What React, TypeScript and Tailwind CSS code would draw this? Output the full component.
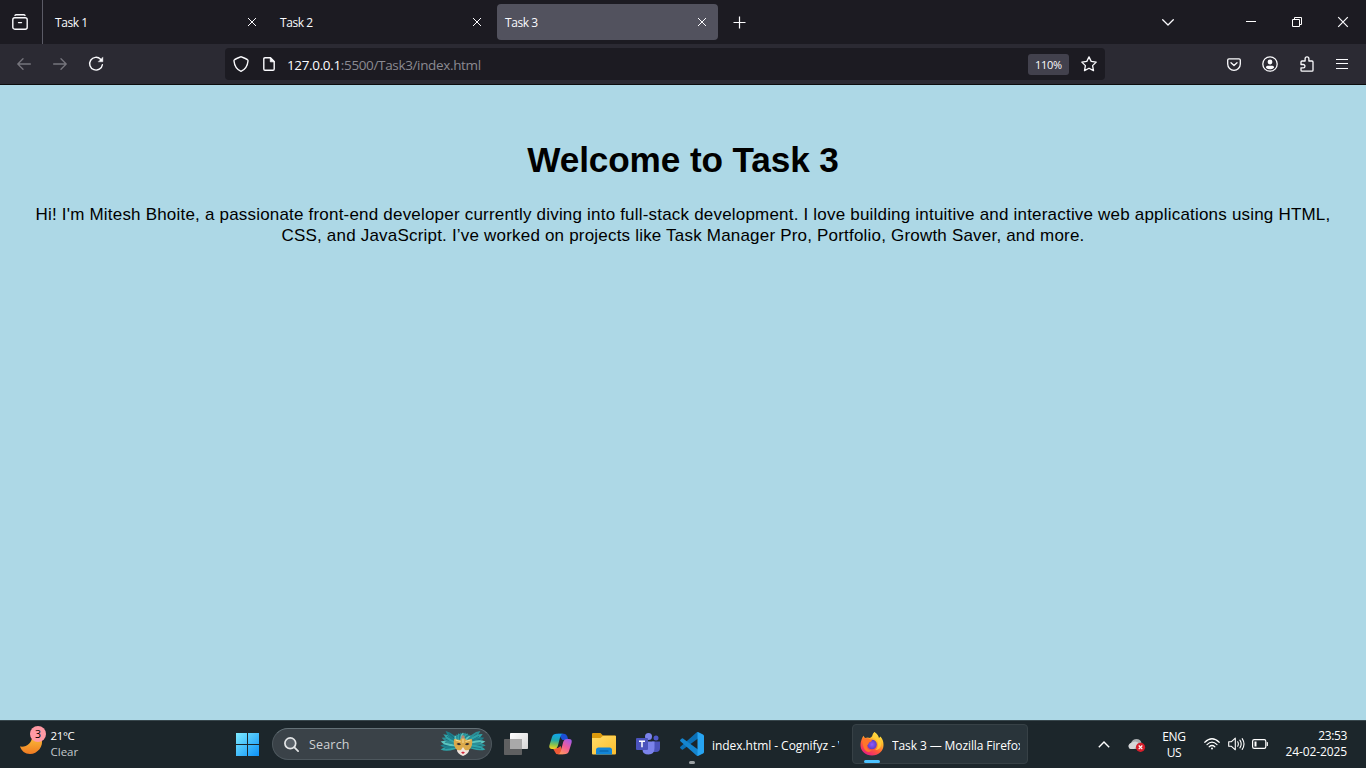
import type { ReactNode } from "react";

const FEATHERS = [-100, -90, -80, -70, -60, -50, -40, -30, -20, -10, 0, 10, 20, 30, 40, 50, 60, 70, 80, 90, 100];
const FEATHER_COLORS = ["#2fa3a8", "#1d7f8c", "#5cc6c0", "#2b8f97"];

function CloseGlyph({ className }: { className: string }) {
  return (
    <svg className={className} viewBox="0 0 10 10" fill="none" stroke="#fbfbfe" strokeWidth="1">
      <path d="M1 1l8 8M9 1L1 9" />
    </svg>
  );
}

function Tab({ title, active = false }: { title: string; active?: boolean }) {
  return (
    <div
      className={
        active
          ? "flex h-9 w-[221px] items-center justify-between rounded bg-[#52525e] pr-[11px] pl-2"
          : "flex h-9 w-[221px] items-center justify-between rounded pr-[11px] pl-2"
      }
    >
      <span className="pt-[2px] text-[12px] leading-4 tracking-[-0.45px] text-[#fbfbfe]">{title}</span>
      <CloseGlyph className="size-[10px]" />
    </div>
  );
}

function Slot({ children, className }: { children: ReactNode; className: string }) {
  return <div className={`flex shrink-0 items-center justify-center ${className}`}>{children}</div>;
}

function TabStrip() {
  return (
    <div className="flex h-11 items-center bg-[#1c1b22]">
      <Slot className="h-11 w-[43px] border-r border-[#5b5b66] pr-[2px]">
        <svg className="size-4" viewBox="0 0 16 16" fill="none" stroke="#fbfbfe" strokeWidth="1.4" strokeLinecap="round">
          <path d="M3 1.4Q3.4.8 4.3.8h7.4q.9 0 1.3.6" />
          <rect x=".8" y="3.7" width="14.4" height="11.5" rx="2" />
          <path d="M6.5 8.6h3" />
        </svg>
      </Slot>
      <div className="flex gap-1 pl-1">
        <Tab title="Task 1" />
        <Tab title="Task 2" />
        <Tab title="Task 3" active />
      </div>
      <Slot className="w-[43px] pt-px">
        <svg className="size-[13px]" viewBox="0 0 13 13" stroke="#fbfbfe" strokeWidth="1.2">
          <path d="M6.500.5v12M.5 6.500h12" />
        </svg>
      </Slot>
      <div className="ml-auto flex items-center">
        <Slot className="mr-[37px] w-[46px]">
          <svg className="h-[7px] w-3" viewBox="0 0 12 7" fill="none" stroke="#fbfbfe" strokeWidth="1.3" strokeLinecap="round" strokeLinejoin="round">
            <path d="M.7.8L6 6l5.3-5.2" />
          </svg>
        </Slot>
        <Slot className="w-[46px]">
          <div className="mb-px h-px w-[10px] bg-white" />
        </Slot>
        <Slot className="w-[46px]">
          <svg className="size-[10px]" viewBox="0 0 10 10" fill="none" stroke="#fff" strokeWidth="1">
            <path d="M.5 2.5h7v7h-7zM2.5 2.5v-2h7v7h-2" />
          </svg>
        </Slot>
        <Slot className="w-[46px]">
          <CloseGlyph className="size-3" />
        </Slot>
      </div>
    </div>
  );
}

function Toolbar() {
  return (
    <div className="flex h-[41px] items-center border-b border-[#0c0c0d] bg-[#2b2a33]">
      <div className="flex pl-[6px]">
        <Slot className="w-9">
          <svg className="h-3 w-[14px]" viewBox="0 0 14 12" fill="none" stroke="#76757d" strokeWidth="1.3" strokeLinecap="round" strokeLinejoin="round">
            <path d="M6 .8L.8 6 6 11.2M1 6h12.4" />
          </svg>
        </Slot>
        <Slot className="w-9">
          <svg className="h-3 w-[14px]" viewBox="0 0 14 12" fill="none" stroke="#76757d" strokeWidth="1.3" strokeLinecap="round" strokeLinejoin="round">
            <path d="M8 .8L13.2 6 8 11.2M13 6H.6" />
          </svg>
        </Slot>
        <Slot className="w-9">
          <svg className="size-4" viewBox="0 0 16 16" fill="none" stroke="#fbfbfe" strokeWidth="1.4" strokeLinecap="round">
            <path d="M12.6 3.2A6.4 6.4 0 1 0 14.4 8.6" />
            <path d="M14.9 1.3v4.5h-4.5z" fill="#fbfbfe" stroke="#fbfbfe" strokeWidth=".4" />
          </svg>
        </Slot>
      </div>
      <div className="ml-[111px] flex h-8 w-[880px] items-center rounded bg-[#1c1b22]">
        <Slot className="w-8">
          <svg className="size-4" viewBox="0 0 16 16" fill="none" stroke="#fbfbfe" strokeWidth="1.4" strokeLinejoin="round">
            <path d="M8 .8c-.5 0-5.4 2.3-6.2 2.7-.7.4-.9.7-.8 1.5C1.5 10 3.3 13.4 8 15.3c4.7-1.9 6.5-5.3 7-10.3.1-.8-.1-1.1-.8-1.5C13.400 3.100 8.500.8 8 .8z" />
          </svg>
        </Slot>
        <Slot className="w-6">
          <svg className="h-[14px] w-3" viewBox="0 0 12 14" fill="none" stroke="#fbfbfe" strokeWidth="1.4" strokeLinejoin="round">
            <path d="M7.500.8H2Q.8.8.8 2v10q0 1.200 1.200 1.200h8q1.200 0 1.200-1.200V4.600z" />
            <path d="M7.300.8v4h4z" fill="#fbfbfe" strokeWidth=".8" />
          </svg>
        </Slot>
        <div className="pt-[2px] pl-[6px] text-[13.5px] leading-5 tracking-[-0.35px] text-[#8b8a91]">
          <span className="text-[#fbfbfe]">127.0.0.1</span>:5500/Task3/index.html
        </div>
        <div className="ml-auto h-[21px] w-[41px] rounded-[3px] bg-[#42414d] pt-px text-center text-[11px] leading-[20px] tracking-[-0.3px] text-[#fbfbfe]">
          110%
        </div>
        <Slot className="w-9 pl-1">
          <svg className="size-4" viewBox="0 0 16 16" fill="none" stroke="#fbfbfe" strokeWidth="1.3" strokeLinejoin="round">
            <path d="M8 .9l2.200 4.500 5 .7-3.600 3.500.9 5L8 12.200l-4.500 2.400.9-5L.8 6.100l5-.7z" />
          </svg>
        </Slot>
      </div>
      <div className="ml-auto flex pr-[6px]">
        <Slot className="w-9">
          <svg className="h-[13px] w-[14px]" viewBox="0 0 14 13" fill="none" stroke="#fbfbfe" strokeWidth="1.3" strokeLinecap="round" strokeLinejoin="round">
            <path d="M2 .8h10q1.300 0 1.300 1.300V6a6.300 6.300 0 0 1-12.600 0V2.100Q.7.8 2 .8z" />
            <path d="M4 4.800l3 2.800 3-2.800" />
          </svg>
        </Slot>
        <Slot className="w-9">
          <svg className="size-4" viewBox="0 0 16 16" fill="none" stroke="#fbfbfe" strokeWidth="1.3">
            <circle cx="8" cy="8" r="7.200" />
            <circle cx="8" cy="6" r="2.400" fill="#fbfbfe" stroke="none" />
            <path d="M4 11.800V11.200Q4 9.700 5.500 9.700h5q1.500 0 1.500 1.500v.6Q10.500 13.300 8 13.300T4 11.800z" fill="#fbfbfe" stroke="none" />
          </svg>
        </Slot>
        <Slot className="w-9 pl-px">
          <svg className="h-4 w-[14px]" viewBox="0 0 14 16" fill="none" stroke="#fbfbfe" strokeWidth="1.3" strokeLinejoin="round">
            <path d="M1 8.500V6q0-1 1-1h3.100V2.800a1.900 1.900 0 0 1 3.800 0V5h3.100q1 0 1 1v8.200q0 1-1 1H2q-1 0-1-1v-2.400h2.300a1.650 1.650 0 0 0 0-3.300z" />
          </svg>
        </Slot>
        <Slot className="w-9">
          <svg className="h-[10px] w-3" viewBox="0 0 12 10" stroke="#fbfbfe" strokeWidth="1" shapeRendering="crispEdges">
            <path d="M0 .5h12M0 4.500h12M0 9.500h12" />
          </svg>
        </Slot>
      </div>
    </div>
  );
}

function Weather() {
  return (
    <div className="flex w-[232px] shrink-0 items-center pl-[19px]">
      <div className="relative -mt-[9px] size-7">
        <svg className="size-7" viewBox="0 0 28 28">
          <defs>
            <linearGradient id="moon" x1="0" y1="0" x2="0" y2="1">
              <stop offset="0" stopColor="#fbc53b" />
              <stop offset="1" stopColor="#f07a22" />
            </linearGradient>
          </defs>
          <path d="M1 20.500C7 21.500 13 18 13.500 9l9 4c2.500 7-4 15-11.500 15C6 28 2.500 25 1 20.500z" fill="url(#moon)" />
        </svg>
        <div className="absolute top-0 left-[11px] size-4 rounded-full bg-[#ff99a4] text-center text-[10.500px] leading-4 text-black">3</div>
      </div>
      <div className="-mt-px pl-[3.500px] text-[11.500px] leading-4 tracking-[-0.35px]">
        <div className="text-white">21°C</div>
        <div className="tracking-normal text-[#c3c8cb]">Clear</div>
      </div>
    </div>
  );
}

function Mask() {
  return (
    <svg className="h-[28px] w-[48px]" viewBox="0 0 48 28">
      {FEATHERS.map((angle, i) => (
        <g key={angle} transform={`translate(24 15.500) rotate(${angle}) scale(1.500 ${Math.abs(angle) > 40 ? 1.420 : 0.820})`}>
          <path d="M0 0Q-3.600-11 0-16 2.800-11 0 0z" fill={FEATHER_COLORS[i % 4]} />
          <path d="M0 0v-13" stroke="#175e70" strokeWidth=".4" />
        </g>
      ))}
      <path d="M18 14h12v6q0 3.500-6 6-6-2.500-6-6z" fill="#f0e4dc" />
      <path d="M15 9l6 1 3-4 3 4 6-1q1 6-2 10-2 2-5 1l-2-3-2 3q-3 1-5-1-3-4-2-10z" fill="#dba94a" />
      <path d="M16.500 10l5 1.500M31.500 10l-5 1.500M24 7v6" stroke="#f7dc93" strokeWidth="1" />
      <path d="M17.500 14q2.500-2 4.500.5-2.500 1.500-4.500-.5zM30.500 14q-2.500-2-4.500.5 2.500 1.500 4.500-.5z" fill="#3a3330" />
      <path d="M22 22.500l2-1 2 1-2 1.500z" fill="#d3293e" />
      <circle cx="24" cy="7" r="1.700" fill="#b58b73" />
    </svg>
  );
}

function Copilot() {
  return (
    <svg className="h-[22px] w-[23px]" viewBox="0 0 23 22">
      <defs>
        <linearGradient id="cpA" x1=".3" y1="0" x2=".2" y2="1">
          <stop offset="0" stopColor="#12a5e8" />
          <stop offset=".4" stopColor="#20a8ae" />
          <stop offset=".72" stopColor="#8cc34c" />
          <stop offset="1" stopColor="#ffd21c" />
        </linearGradient>
        <linearGradient id="cpB" x1=".8" y1="0" x2=".2" y2="1">
          <stop offset="0" stopColor="#a35bea" />
          <stop offset=".5" stopColor="#f25c96" />
          <stop offset="1" stopColor="#ff9a5c" />
        </linearGradient>
      </defs>
      <path d="M9 .8h6q2.500 0 3.300 2.700L19.300 7h-6z" fill="#1b4fd6" />
      <path d="M3.700 15h5l3-2 2.500 8.200H9q-2.500 0-3.300-2.700z" fill="#ef5a36" />
      <path d="M8 .8h6q-2 0-2.700 2.600L8.800 13Q7.800 16 5 16H3Q-.5 16 .5 12L3 4Q4 .8 8 .8z" fill="url(#cpA)" />
      <path d="M15 21.200H9q2 0 2.700-2.600L14.200 9Q15.200 6 18 6h2q3.500 0 2.500 4L20 18q-1 3.200-5 3.200z" fill="url(#cpB)" />
    </svg>
  );
}

function Explorer() {
  return (
    <svg className="h-[22px] w-6" viewBox="0 0 24 22">
      <defs>
        <linearGradient id="folder" x1="0" y1="0" x2="1" y2="1">
          <stop offset="0" stopColor="#ffdc68" />
          <stop offset="1" stopColor="#fbbd2d" />
        </linearGradient>
      </defs>
      <path d="M0 1Q0 0 1 0h7.500L11 2.500h12q1 0 1 1V10H0z" fill="#dc9a0c" />
      <path d="M0 5h8.500L11 2.800h12q1 0 1 1V20.500q0 1-1 1H1q-1 0-1-1z" fill="url(#folder)" />
      <path d="M4 21.500V17q0-2.500 2.500-2.500h11Q20 14.500 20 17v4.500z" fill="#1285d6" />
      <path d="M8 18h8" stroke="#075c9e" strokeWidth="1.200" strokeLinecap="round" />
    </svg>
  );
}

function Teams() {
  return (
    <svg className="h-[22px] w-6" viewBox="0 0 24 22">
      <circle cx="20" cy="5" r="2.500" fill="#4f58c9" />
      <path d="M16 8.500h8V15q0 4-4 4h-4z" fill="#4b53bc" />
      <circle cx="12.500" cy="3.500" r="3.500" fill="#7b83eb" />
      <path d="M6.500 8.500h12V15q0 6.500-6 6.500t-6-5z" fill="#7b83eb" />
      <rect y="5" width="12" height="12" rx="1" fill="#4b53bc" />
      <path d="M3 8.200h6M6 8.200V14.200" stroke="#fff" strokeWidth="1.500" />
    </svg>
  );
}

function VsCode() {
  return (
    <svg className="size-6" viewBox="0 0 24 24">
      <path d="M18 0v6.500L3 17.500q-.6.400-1.200 0L.4 16.200q-.7-.7 0-1.400L16.500.5Q17.200-.2 18 0z" fill="#0b6fb5" />
      <path d="M18 24v-6.500L3 6.500q-.6-.4-1.200 0L.4 7.800q-.7.7 0 1.400l16.100 14.300q.7.700 1.500.5z" fill="#1585cf" />
      <path d="M17.500.2Q17.900 0 18.500.200l4.500 2.200q1 .5 1 1.500v16.200q0 1-1 1.500l-4.500 2.200q-.6.200-1 0z" fill="#27a4f2" />
    </svg>
  );
}

function Firefox() {
  return (
    <svg className="size-6" viewBox="0 0 24 24">
      <defs>
        <linearGradient id="fox" x1=".8" y1="0" x2=".25" y2="1">
          <stop offset="0" stopColor="#fff04a" />
          <stop offset=".35" stopColor="#ffb52b" />
          <stop offset=".65" stopColor="#ff5b36" />
          <stop offset="1" stopColor="#e81886" />
        </linearGradient>
        <radialGradient id="globe">
          <stop offset="0" stopColor="#9059ff" />
          <stop offset="1" stopColor="#5b3fc4" />
        </radialGradient>
      </defs>
      <path d="M14.500 0c3 2 4 4 4.500 6l1.500-1.500C23 7.500 23.500 10 23.500 13c0 6-5 10.500-11.500 10.500S.500 19 .5 13c0-3 1-5.500 2-7.500l.8-1.700L5 6q3-.8 5 0l2.500-2Q13 1.500 14.500 0z" fill="url(#fox)" />
      <circle cx="12" cy="12.500" r="4.800" fill="url(#globe)" />
      <path d="M2.500 5.500L5 6.500q3-1 5 1l2 .5q0 1.500-3 2.500c-.5 2-1.500 2-2 3-.8 3 2 5 5 4.800l-3 1.800C4.500 20 2 14 2.500 5.500z" fill="#ff752b" />
      <path d="M12.500 6q5.500 1 5.500 6 0 4-3 6 5.500 0 6-5T18 6.500L14.500 0q-3 2.500-2 6z" fill="#ffcf3b" opacity=".8" />
    </svg>
  );
}

function Tray() {
  return (
    <div className="ml-auto flex items-center">
      <Slot className="w-8">
        <svg className="h-[7px] w-3" viewBox="0 0 12 7" fill="none" stroke="#fff" strokeWidth="1.400">
          <path d="M.8 6.200L6 1l5.200 5.200" />
        </svg>
      </Slot>
      <Slot className="w-8 pt-px pl-px">
        <svg className="h-[14px] w-[18px]" viewBox="0 0 18 14">
          <path d="M1 10Q-.5 6 3 5 4.500 1 8.500 1q4 0 5 4l-2 6H3Q1.500 11 1 10z" fill="#aaadb0" />
          <path d="M5 4Q9 2.500 12 6.500L6 11H3Q0 10 .8 7q1.200-2 4.200-3z" fill="#d4d6d8" />
          <circle cx="12.500" cy="9.300" r="4.600" fill="#d71e2b" />
          <path d="M10.700 7.500l3.600 3.600M14.300 7.500l-3.600 3.600" stroke="#fff" strokeWidth="1.200" />
        </svg>
      </Slot>
      <div className="w-[44px] pt-[2px] text-center text-[12px] leading-4 tracking-[-0.35px]">
        <div>ENG</div>
        <div>US</div>
      </div>
      <div className="flex w-[88px] items-center gap-2 pl-[8px]">
        <svg className="h-3 w-4 shrink-0" viewBox="0 0 16 12" fill="none" stroke="#fff" strokeWidth="1.200" strokeLinecap="round">
          <path d="M.8 4.300Q8-2.800 15.200 4.300M3 6.600Q8 1.800 13 6.600M5.200 8.800Q8 6.200 10.800 8.800" />
          <circle cx="8" cy="10.500" r="1" fill="#fff" stroke="none" />
        </svg>
        <svg className="h-[14px] w-[17px] shrink-0" viewBox="0 0 17 14" fill="none" stroke="#fff" strokeWidth="1.100" strokeLinecap="round" strokeLinejoin="round">
          <path d="M.7 4.700h2.800L7.300 1.200v11.600L3.500 9.300H.7zM9.700 4.800q1.300 2.200 0 4.400M11.900 3.100q2.600 3.900 0 7.800M14.200 1.600q3.600 5.400 0 10.800" />
        </svg>
        <svg className="-ml-px h-[10px] w-4 shrink-0" viewBox="0 0 16 10" fill="none" stroke="#fff" strokeWidth="1.200">
          <rect x=".6" y=".6" width="13.200" height="8.800" rx="1.600" />
          <path d="M15.300 3.500v3" strokeLinecap="round" />
          <path d="M2.500 2.500h2v5h-2z" fill="#fff" stroke="none" />
        </svg>
      </div>
      <div className="w-[82px] pr-[19px] text-right text-[12px] leading-4 tracking-[-0.1px] whitespace-nowrap">
        <div className="tracking-[-0.35px]">23:53</div>
        <div className="flex justify-end">24-02-2025</div>
      </div>
    </div>
  );
}

function Taskbar() {
  return (
    <div className="flex h-12 items-center border-t border-[#38474d] bg-[#1c262b] pb-px text-white">
      <Weather />
      <div className="w-[40px] shrink-0 pt-px pl-[4px]">
        <svg className="size-[23px]" viewBox="0 0 23 23">
          <defs>
            <linearGradient id="win" x1="0" y1="0" x2="23" y2="23" gradientUnits="userSpaceOnUse">
              <stop stopColor="#7deaff" />
              <stop offset="1" stopColor="#0c91f8" />
            </linearGradient>
          </defs>
          <path d="M0 0h11v11H0zM12 0h11v11H12zM0 12h11v11H0zM12 12h11v11H12z" fill="url(#win)" />
        </svg>
      </div>
      <div className="flex h-8 w-[220px] shrink-0 items-center rounded-full border border-[#4d575d] border-t-[#647177] bg-[#3a4248] pr-[4px] pl-[11px]">
        <svg className="size-[15px]" viewBox="0 0 15 15" fill="none" stroke="#e4e6e7" strokeWidth="1.700" strokeLinecap="round">
          <circle cx="6.300" cy="6.300" r="5.400" fill="#596168" />
          <path d="M10.400 10.400l3.700 3.700" />
        </svg>
        <span className="pt-[2px] pl-[10px] text-[12.500px] tracking-[0.18px] text-[#cfd2d4]">Search</span>
        <div className="ml-auto">
          <Mask />
        </div>
      </div>
      <Slot className="w-12">
        <svg className="h-[22px] w-6" viewBox="0 0 24 22">
          <defs>
            <linearGradient id="pane" x1="0" y1="0" x2="1" y2="1">
              <stop stopColor="#fff" />
              <stop offset="1" stopColor="#d5d5d5" />
            </linearGradient>
          </defs>
          <rect x="6" width="18" height="16" rx=".8" fill="url(#pane)" />
          <rect y="6" width="18" height="16" rx=".8" fill="#5f6061" />
          <path d="M6 6h12v10H6z" fill="#a9a9a9" />
        </svg>
      </Slot>
      <Slot className="w-10">
        <Copilot />
      </Slot>
      <Slot className="w-12">
        <Explorer />
      </Slot>
      <Slot className="w-10">
        <Teams />
      </Slot>
      <div className="relative ml-[12px] flex h-10 w-[164px] shrink-0 items-center">
        <VsCode />
        <span className="ml-2 w-[127px] overflow-hidden pt-[3px] text-[12px] tracking-[-0.05px] whitespace-nowrap">index.html - Cognifyz - V</span>
        <div className="absolute bottom-0 left-[9px] h-[3px] w-[6px] rounded-full bg-[#9ba1a4]" />
      </div>
      <div className="relative ml-[8px] flex h-10 w-[176px] shrink-0 items-center rounded border border-[#374146] bg-[#29343a] pl-[7px]">
        <Firefox />
        <span className="ml-2 w-[128px] overflow-hidden pt-[3px] text-[12px] tracking-[-0.1px] whitespace-nowrap">Task 3 — Mozilla Firefox</span>
        <div className="absolute bottom-0 left-[11px] h-[3px] w-4 rounded-full bg-[#4cc2ff]" />
      </div>
      <Tray />
    </div>
  );
}

export default function App() {
  return (
    <div className="flex h-screen w-full flex-col overflow-hidden bg-[#add8e6] font-['Open_Sans','Noto_Sans',sans-serif]">
      <TabStrip />
      <Toolbar />
      <main className="flex-1 px-[31px] pt-[55px] text-center font-['Liberation_Sans',Arial,sans-serif] text-black">
        <h1 className="text-[35.200px] leading-10 font-bold tracking-[-0.120px]">Welcome to Task 3</h1>
        <p className="mt-6 text-[17px] leading-[21px] tracking-[0.197px]">
          Hi! I'm Mitesh Bhoite, a passionate front-end developer currently diving into full-stack development. I love building intuitive and interactive web applications using HTML, CSS, and JavaScript. I’ve worked on projects like Task Manager Pro, Portfolio, Growth Saver, and more.
        </p>
      </main>
      <Taskbar />
    </div>
  );
}
